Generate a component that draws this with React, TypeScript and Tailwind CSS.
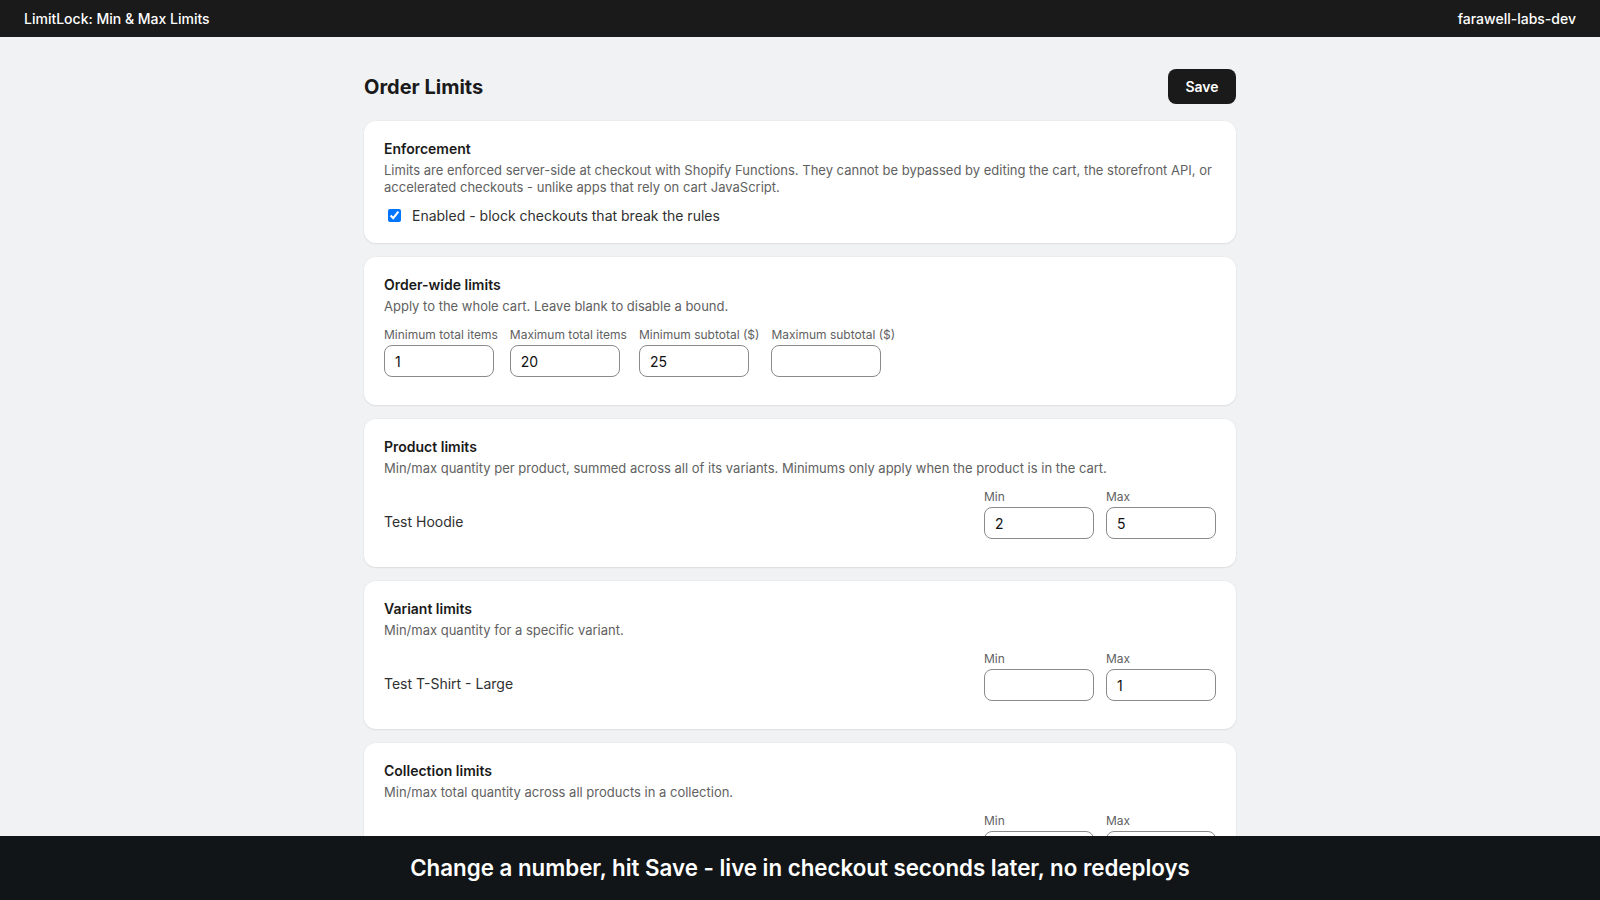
import React from "react";

type Field = { label: string; value: string };

const orderFields: Field[] = [
  { label: "Minimum total items", value: "1" },
  { label: "Maximum total items", value: "20" },
  { label: "Minimum subtotal ($)", value: "25" },
  { label: "Maximum subtotal ($)", value: "" },
];

function NumberField({ label, value }: Field) {
  return (
    <label className="flex flex-col gap-[2px]">
      <span className="text-[12px] leading-4 text-[#616161] whitespace-nowrap">{label}</span>
      <input
        type="text"
        defaultValue={value}
        className="h-8 w-[110px] rounded-lg border border-[#8a8a8a] bg-white px-[10px] text-[14px] text-[#111] outline-none"
      />
    </label>
  );
}

function Card({
  title,
  description,
  children,
  bottom = "pb-4",
}: {
  title: string;
  description: string;
  children?: React.ReactNode;
  bottom?: string;
}) {
  return (
    <section
      className={`rounded-xl bg-white px-5 pt-[18px] ${bottom} shadow-[0_1px_2px_rgba(0,0,0,0.07),0_0_0_1px_rgba(0,0,0,0.02)]`}
    >
      <h2 className="text-[14px] font-semibold leading-5 text-[#1a1a1a]">{title}</h2>
      <p className="mt-[3px] text-[13px] leading-[17px] text-[#616161]">{description}</p>
      {children}
    </section>
  );
}

function LimitRow({ name, min, max }: { name: string; min: string; max: string }) {
  return (
    <div className="mt-3 mb-3 flex items-end justify-between">
      <div className="flex h-8 items-center pb-[3px] text-[14px] text-[#303030]">{name}</div>
      <div className="flex gap-3">
        <NumberField label="Min" value={min} />
        <NumberField label="Max" value={max} />
      </div>
    </div>
  );
}

export default function App() {
  return (
    <div className="min-h-screen bg-[#f1f2f4] font-['Inter','Noto_Sans',sans-serif] text-[#1a1a1a]">
      <header className="flex h-[37px] items-center justify-between bg-[#1a1a1a] px-6 text-[14px] font-medium text-white">
        <span>LimitLock: Min &amp; Max Limits</span>
        <span>farawell-labs-dev</span>
      </header>

      <main className="mx-auto w-[872px] pt-8 pb-28">
        <div className="mb-[17px] flex h-[35px] items-center justify-between">
          <h1 className="text-[20px] font-bold text-[#1a1a1a]">Order Limits</h1>
          <button className="h-[35px] w-[68px] rounded-lg bg-[#1a1a1a] text-[14px] font-semibold text-white">
            Save
          </button>
        </div>

        <div className="flex flex-col gap-[14px]">
          <Card
            title="Enforcement"
            bottom="pb-[17px]"
            description="Limits are enforced server-side at checkout with Shopify Functions. They cannot be bypassed by editing the cart, the storefront API, or accelerated checkouts - unlike apps that rely on cart JavaScript."
          >
            <label className="mt-2 flex h-[22px] items-center text-[14px] text-[#303030]">
              <input type="checkbox" defaultChecked className="ml-1 mr-[11px] h-[13px] w-[13px]" />
              Enabled - block checkouts that break the rules
            </label>
          </Card>

          <Card title="Order-wide limits" description="Apply to the whole cart. Leave blank to disable a bound.">
            <div className="mt-3 mb-3 flex gap-3">
              {orderFields.map((f) => (
                <NumberField key={f.label} label={f.label} value={f.value} />
              ))}
            </div>
          </Card>

          <Card
            title="Product limits"
            description="Min/max quantity per product, summed across all of its variants. Minimums only apply when the product is in the cart."
          >
            <LimitRow name="Test Hoodie" min="2" max="5" />
          </Card>

          <Card title="Variant limits" description="Min/max quantity for a specific variant.">
            <LimitRow name="Test T-Shirt - Large" min="" max="1" />
          </Card>

          <Card title="Collection limits" description="Min/max total quantity across all products in a collection.">
            <LimitRow name="Summer Collection" min="" max="" />
          </Card>
        </div>
      </main>

      <div className="fixed inset-x-0 bottom-0 flex h-16 items-center justify-center bg-[#121517] text-[22.3px] font-semibold text-white">
        Change a number, hit Save - live in checkout seconds later, no redeploys
      </div>
    </div>
  );
}
